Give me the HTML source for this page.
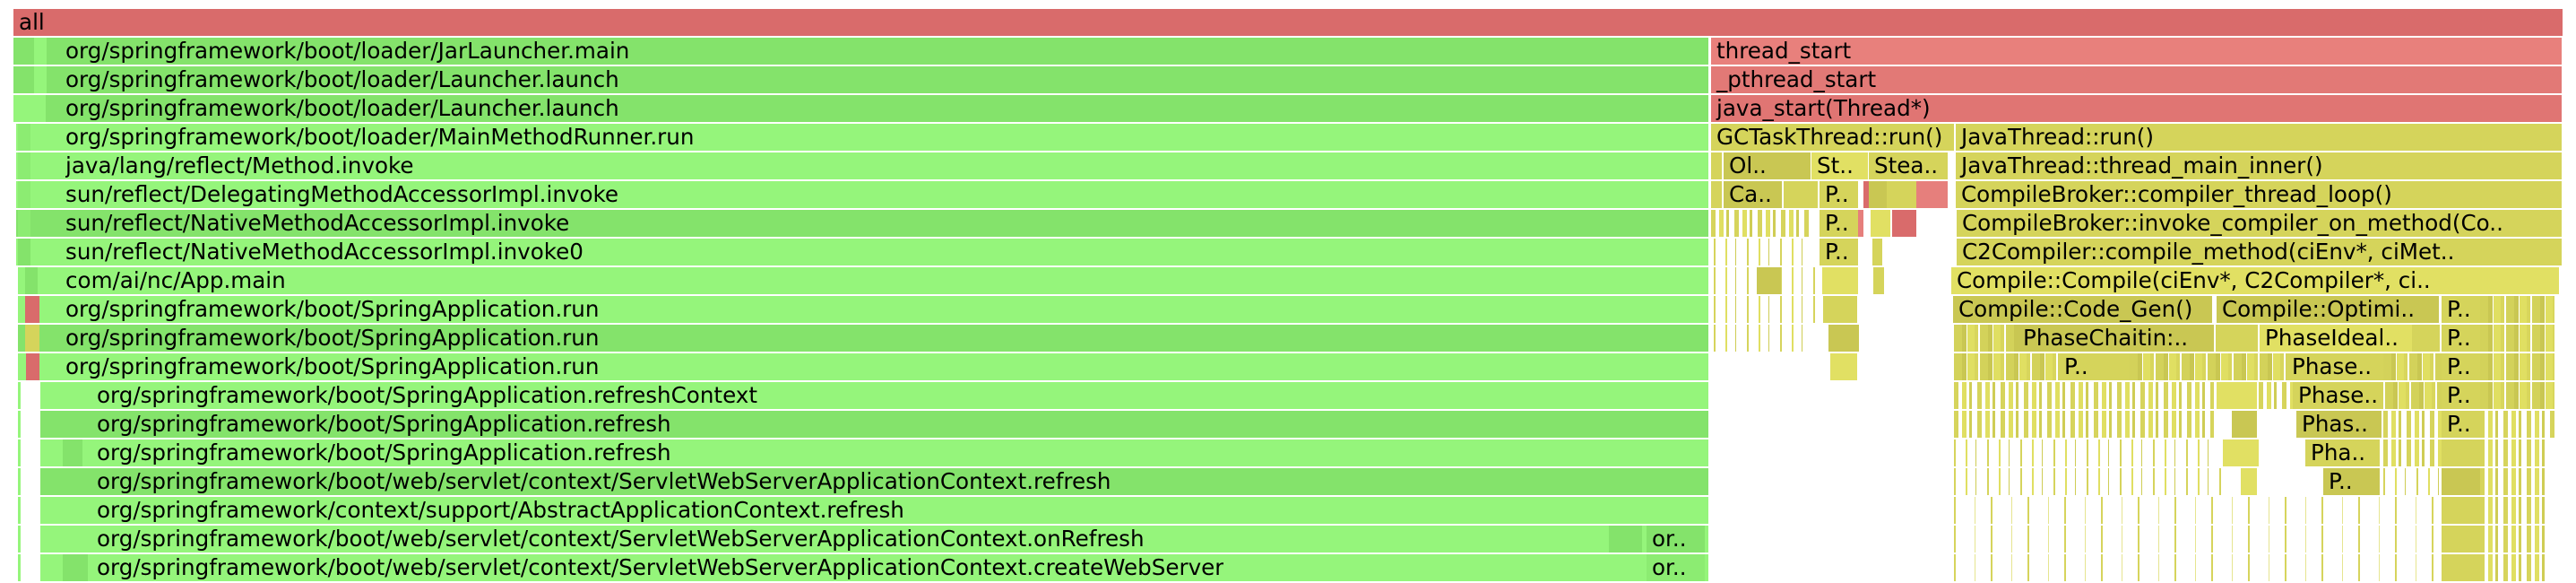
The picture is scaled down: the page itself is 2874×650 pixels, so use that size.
<!DOCTYPE html>
<html><head><meta charset="utf-8"><style>
html,body{margin:0;padding:0;background:#fff;width:2874px;height:650px;overflow:hidden;position:relative}
.b{position:absolute;height:30px;font-family:"DejaVu Sans","Liberation Sans",sans-serif;font-size:24.6px;line-height:30px;color:#000;white-space:nowrap;overflow:hidden;box-sizing:border-box}
.t{padding-left:6px}
.g1{background:#95f57b}.g2{background:#84e36b}.g3{background:#8cec72}
.y1{background:#d5d45b}.y2{background:#c9c753}.y3{background:#e1e063}
.rd{background:#d96b6b}.rl{background:#e67f7c}
.dn{background:repeating-linear-gradient(90deg,#d3d25a 0 9px,#c9c752 9px 14px,#fff 14px 15px,#e0df62 15px 23px,#d8d65c 23px 27px,#fff 27px 29px)}
.md{background:repeating-linear-gradient(90deg,#d6d45c 0 5px,#fff 5px 9px,#e0df62 9px 14px,#fff 14px 17px,#cfcd55 17px 20px,#fff 20px 26px)}
.sp{background:repeating-linear-gradient(90deg,#d6d45c 0 2px,#fff 2px 13px,#e0df62 13px 15px,#fff 15px 24px,#cfcd55 24px 25px,#fff 25px 37px)}
.vs{background:repeating-linear-gradient(90deg,#d6d45c 0 2px,#fff 2px 23px,#e6e590 23px 24px,#fff 24px 41px)}
</style></head><body>
<div class="b rd t" style="top:10px;left:15px;width:2844px">all</div>

<div class="b g2" style="top:42px;left:15px;width:1891px"></div>
<div class="b g2" style="top:74px;left:15px;width:1891px"></div>
<div class="b g2" style="top:106px;left:17px;width:1889px"></div>
<div class="b g1" style="top:138px;left:18px;width:1888px"></div>
<div class="b g1" style="top:170px;left:18px;width:1888px"></div>
<div class="b g1" style="top:202px;left:18px;width:1888px"></div>
<div class="b g2" style="top:234px;left:18px;width:1888px"></div>
<div class="b g1" style="top:266px;left:18px;width:1888px"></div>
<div class="b g1" style="top:298px;left:20px;width:1886px"></div>
<div class="b g1" style="top:330px;left:20px;width:1886px"></div>
<div class="b g2" style="top:362px;left:20px;width:1886px"></div>
<div class="b g1" style="top:394px;left:20px;width:1886px"></div>
<div class="b g1" style="top:426px;left:45px;width:1861px"></div>
<div class="b g2" style="top:458px;left:45px;width:1861px"></div>
<div class="b g1" style="top:490px;left:45px;width:1861px"></div>
<div class="b g2" style="top:522px;left:45px;width:1861px"></div>
<div class="b g1" style="top:554px;left:45px;width:1861px"></div>
<div class="b g1" style="top:586px;left:45px;width:1861px"></div>
<div class="b g1" style="top:618px;left:45px;width:1861px"></div>
<div class="b g2" style="top:42px;left:15px;width:22px"></div>
<div class="b g1" style="top:42px;left:38px;width:14px"></div>
<div class="b g1" style="top:74px;left:38px;width:14px"></div>
<div class="b g1" style="top:106px;left:15px;width:36px"></div>
<div class="b g3" style="top:138px;left:20px;width:14px"></div>
<div class="b g3" style="top:170px;left:20px;width:14px"></div>
<div class="b g3" style="top:202px;left:20px;width:14px"></div>
<div class="b g3" style="top:234px;left:20px;width:14px"></div>
<div class="b g2" style="top:266px;left:20px;width:14px"></div>
<div class="b g2" style="top:298px;left:28px;width:14px"></div>
<div class="b rd" style="top:330px;left:28px;width:16px"></div>
<div class="b y1" style="top:362px;left:28px;width:16px"></div>
<div class="b rd" style="top:394px;left:29px;width:15px"></div>
<div class="b g1" style="top:426px;left:20px;width:3px"></div>
<div class="b g1" style="top:458px;left:20px;width:3px"></div>
<div class="b g1" style="top:490px;left:20px;width:3px"></div>
<div class="b g1" style="top:522px;left:20px;width:3px"></div>
<div class="b g1" style="top:554px;left:20px;width:3px"></div>
<div class="b g1" style="top:586px;left:20px;width:3px"></div>
<div class="b g1" style="top:618px;left:20px;width:3px"></div>
<div class="b g2" style="top:458px;left:70px;width:30px"></div>
<div class="b g2" style="top:490px;left:70px;width:22px"></div>
<div class="b g2" style="top:522px;left:70px;width:30px"></div>
<div class="b g2" style="top:618px;left:70px;width:28px"></div>
<div class="b g2" style="top:586px;left:1795px;width:37px"></div>
<div class="b g2 t" style="top:586px;left:1837px;width:65px">or..</div>
<div class="b g3 t" style="top:618px;left:1837px;width:65px">or..</div>

<div class="b" style="top:42px;left:73px">org/springframework/boot/loader/JarLauncher.main</div>
<div class="b" style="top:74px;left:73px">org/springframework/boot/loader/Launcher.launch</div>
<div class="b" style="top:106px;left:73px">org/springframework/boot/loader/Launcher.launch</div>
<div class="b" style="top:138px;left:73px">org/springframework/boot/loader/MainMethodRunner.run</div>
<div class="b" style="top:170px;left:73px">java/lang/reflect/Method.invoke</div>
<div class="b" style="top:202px;left:73px">sun/reflect/DelegatingMethodAccessorImpl.invoke</div>
<div class="b" style="top:234px;left:73px">sun/reflect/NativeMethodAccessorImpl.invoke</div>
<div class="b" style="top:266px;left:73px">sun/reflect/NativeMethodAccessorImpl.invoke0</div>
<div class="b" style="top:298px;left:73px">com/ai/nc/App.main</div>
<div class="b" style="top:330px;left:73px">org/springframework/boot/SpringApplication.run</div>
<div class="b" style="top:362px;left:73px">org/springframework/boot/SpringApplication.run</div>
<div class="b" style="top:394px;left:73px">org/springframework/boot/SpringApplication.run</div>
<div class="b" style="top:426px;left:108px">org/springframework/boot/SpringApplication.refreshContext</div>
<div class="b" style="top:458px;left:108px">org/springframework/boot/SpringApplication.refresh</div>
<div class="b" style="top:490px;left:108px">org/springframework/boot/SpringApplication.refresh</div>
<div class="b" style="top:522px;left:108px">org/springframework/boot/web/servlet/context/ServletWebServerApplicationContext.refresh</div>
<div class="b" style="top:554px;left:108px">org/springframework/context/support/AbstractApplicationContext.refresh</div>
<div class="b" style="top:586px;left:108px">org/springframework/boot/web/servlet/context/ServletWebServerApplicationContext.onRefresh</div>
<div class="b" style="top:618px;left:108px">org/springframework/boot/web/servlet/context/ServletWebServerApplicationContext.createWebServer</div>

<div class="b t" style="top:42px;left:1909px;width:949px;background:#e8807c">thread_start</div>
<div class="b t" style="top:74px;left:1909px;width:949px;background:#e27976">_pthread_start</div>
<div class="b t" style="top:106px;left:1909px;width:949px;background:#e07573">java_start(Thread*)</div>

<div class="b y1 t" style="top:138px;left:1909px;width:271px">GCTaskThread::run()</div>
<div class="b y1 t" style="top:138px;left:2182px;width:676px">JavaThread::run()</div>
<div class="b y1" style="top:170px;left:1909px;width:12px"></div>
<div class="b y2 t" style="top:170px;left:1923px;width:97px">Ol..</div>
<div class="b y3 t" style="top:170px;left:2021px;width:63px">St..</div>
<div class="b y1 t" style="top:170px;left:2085px;width:88px">Stea..</div>
<div class="b y1 t" style="top:170px;left:2182px;width:676px">JavaThread::thread_main_inner()</div>
<div class="b y1" style="top:202px;left:1909px;width:12px"></div>
<div class="b y2 t" style="top:202px;left:1923px;width:65px">Ca..</div>
<div class="b y1" style="top:202px;left:1990px;width:38px"></div>
<div class="b y1 t" style="top:202px;left:2030px;width:43px">P..</div>
<div class="b rd" style="top:202px;left:2079px;width:6px"></div>
<div class="b y2" style="top:202px;left:2085px;width:20px"></div>
<div class="b y1" style="top:202px;left:2105px;width:33px"></div>
<div class="b rl" style="top:202px;left:2138px;width:35px"></div>
<div class="b y1 t" style="top:202px;left:2182px;width:676px">CompileBroker::compiler_thread_loop()</div>
<div class="b md" style="top:234px;left:1909px;width:110px"></div>
<div class="b y1 t" style="top:234px;left:2030px;width:43px">P..</div>
<div class="b rl" style="top:234px;left:2073px;width:6px"></div>
<div class="b y3" style="top:234px;left:2087px;width:22px"></div>
<div class="b rd" style="top:234px;left:2111px;width:27px"></div>
<div class="b y1 t" style="top:234px;left:2183px;width:668px">CompileBroker::invoke_compiler_on_method(Co..</div>
<div class="b y1" style="top:234px;left:2851px;width:7px"></div>
<div class="b sp" style="top:266px;left:1912px;width:110px"></div>
<div class="b y1 t" style="top:266px;left:2030px;width:43px">P..</div>
<div class="b y1" style="top:266px;left:2089px;width:11px"></div>
<div class="b y1 t" style="top:266px;left:2183px;width:675px">C2Compiler::compile_method(ciEnv*, ciMet..</div>
<div class="b sp" style="top:298px;left:1912px;width:120px"></div>
<div class="b y2" style="top:298px;left:1960px;width:27px"></div>
<div class="b y3" style="top:298px;left:2033px;width:40px"></div>
<div class="b y1" style="top:298px;left:2090px;width:12px"></div>
<div class="b y3 t" style="top:298px;left:2177px;width:678px">Compile::Compile(ciEnv*, C2Compiler*, ci..</div>
<div class="b sp" style="top:330px;left:1912px;width:120px"></div>
<div class="b y1" style="top:330px;left:2034px;width:38px"></div>
<div class="b y2 t" style="top:330px;left:2179px;width:289px">Compile::Code_Gen()</div>
<div class="b y2 t" style="top:330px;left:2473px;width:248px">Compile::Optimi..</div>
<div class="b y1 t" style="top:330px;left:2724px;width:43px">P..</div>
<div class="b dn" style="top:330px;left:2767px;width:83px"></div>
<div class="b sp" style="top:362px;left:1912px;width:100px"></div>
<div class="b y2" style="top:362px;left:2040px;width:34px"></div>
<div class="b dn" style="top:362px;left:2180px;width:71px"></div>
<div class="b y2 t" style="top:362px;left:2251px;width:219px">PhaseChaitin:..</div>
<div class="b y1" style="top:362px;left:2472px;width:47px"></div>
<div class="b y3 t" style="top:362px;left:2521px;width:170px">PhaseIdeal..</div>
<div class="b y1" style="top:362px;left:2691px;width:31px"></div>
<div class="b y1 t" style="top:362px;left:2724px;width:43px">P..</div>
<div class="b dn" style="top:362px;left:2767px;width:83px"></div>
<div class="b y3" style="top:394px;left:2042px;width:30px"></div>
<div class="b dn" style="top:394px;left:2180px;width:117px"></div>
<div class="b y1 t" style="top:394px;left:2297px;width:79px">P..</div>
<div class="b dn" style="top:394px;left:2376px;width:175px"></div>
<div class="b y1 t" style="top:394px;left:2551px;width:108px">Phase..</div>
<div class="b dn" style="top:394px;left:2659px;width:65px"></div>
<div class="b y1 t" style="top:394px;left:2724px;width:43px">P..</div>
<div class="b dn" style="top:394px;left:2767px;width:83px"></div>
<div class="b md" style="top:426px;left:2180px;width:290px"></div>
<div class="b y3" style="top:426px;left:2473px;width:45px"></div>
<div class="b md" style="top:426px;left:2520px;width:38px"></div>
<div class="b y1 t" style="top:426px;left:2558px;width:101px">Phase..</div>
<div class="b dn" style="top:426px;left:2661px;width:63px"></div>
<div class="b y1 t" style="top:426px;left:2724px;width:43px">P..</div>
<div class="b dn" style="top:426px;left:2767px;width:83px"></div>
<div class="b md" style="top:458px;left:2180px;width:290px"></div>
<div class="b y2" style="top:458px;left:2490px;width:28px"></div>
<div class="b y2 t" style="top:458px;left:2562px;width:95px">Phas..</div>
<div class="b md" style="top:458px;left:2659px;width:65px"></div>
<div class="b y1 t" style="top:458px;left:2724px;width:43px">P..</div>
<div class="b md" style="top:458px;left:2767px;width:83px"></div>
<div class="b sp" style="top:490px;left:2180px;width:290px"></div>
<div class="b y3" style="top:490px;left:2480px;width:40px"></div>
<div class="b y1 t" style="top:490px;left:2572px;width:83px">Pha..</div>
<div class="b md" style="top:490px;left:2659px;width:65px"></div>
<div class="b y1" style="top:490px;left:2724px;width:43px"></div>
<div class="b md" style="top:490px;left:2767px;width:78px"></div>
<div class="b sp" style="top:522px;left:2180px;width:300px"></div>
<div class="b y3" style="top:522px;left:2500px;width:18px"></div>
<div class="b y2 t" style="top:522px;left:2592px;width:63px">P..</div>
<div class="b sp" style="top:522px;left:2659px;width:65px"></div>
<div class="b y2" style="top:522px;left:2724px;width:43px"></div>
<div class="b md" style="top:522px;left:2767px;width:78px"></div>
<div class="b vs" style="top:554px;left:2180px;width:540px"></div>
<div class="b y1" style="top:554px;left:2724px;width:43px"></div>
<div class="b md" style="top:554px;left:2767px;width:78px"></div>
<div class="b vs" style="top:586px;left:2180px;width:540px"></div>
<div class="b y1" style="top:586px;left:2724px;width:43px"></div>
<div class="b md" style="top:586px;left:2767px;width:78px"></div>
<div class="b vs" style="top:618px;left:2180px;width:540px"></div>
<div class="b y1" style="top:618px;left:2724px;width:43px"></div>
<div class="b md" style="top:618px;left:2767px;width:78px"></div>
</body></html>
